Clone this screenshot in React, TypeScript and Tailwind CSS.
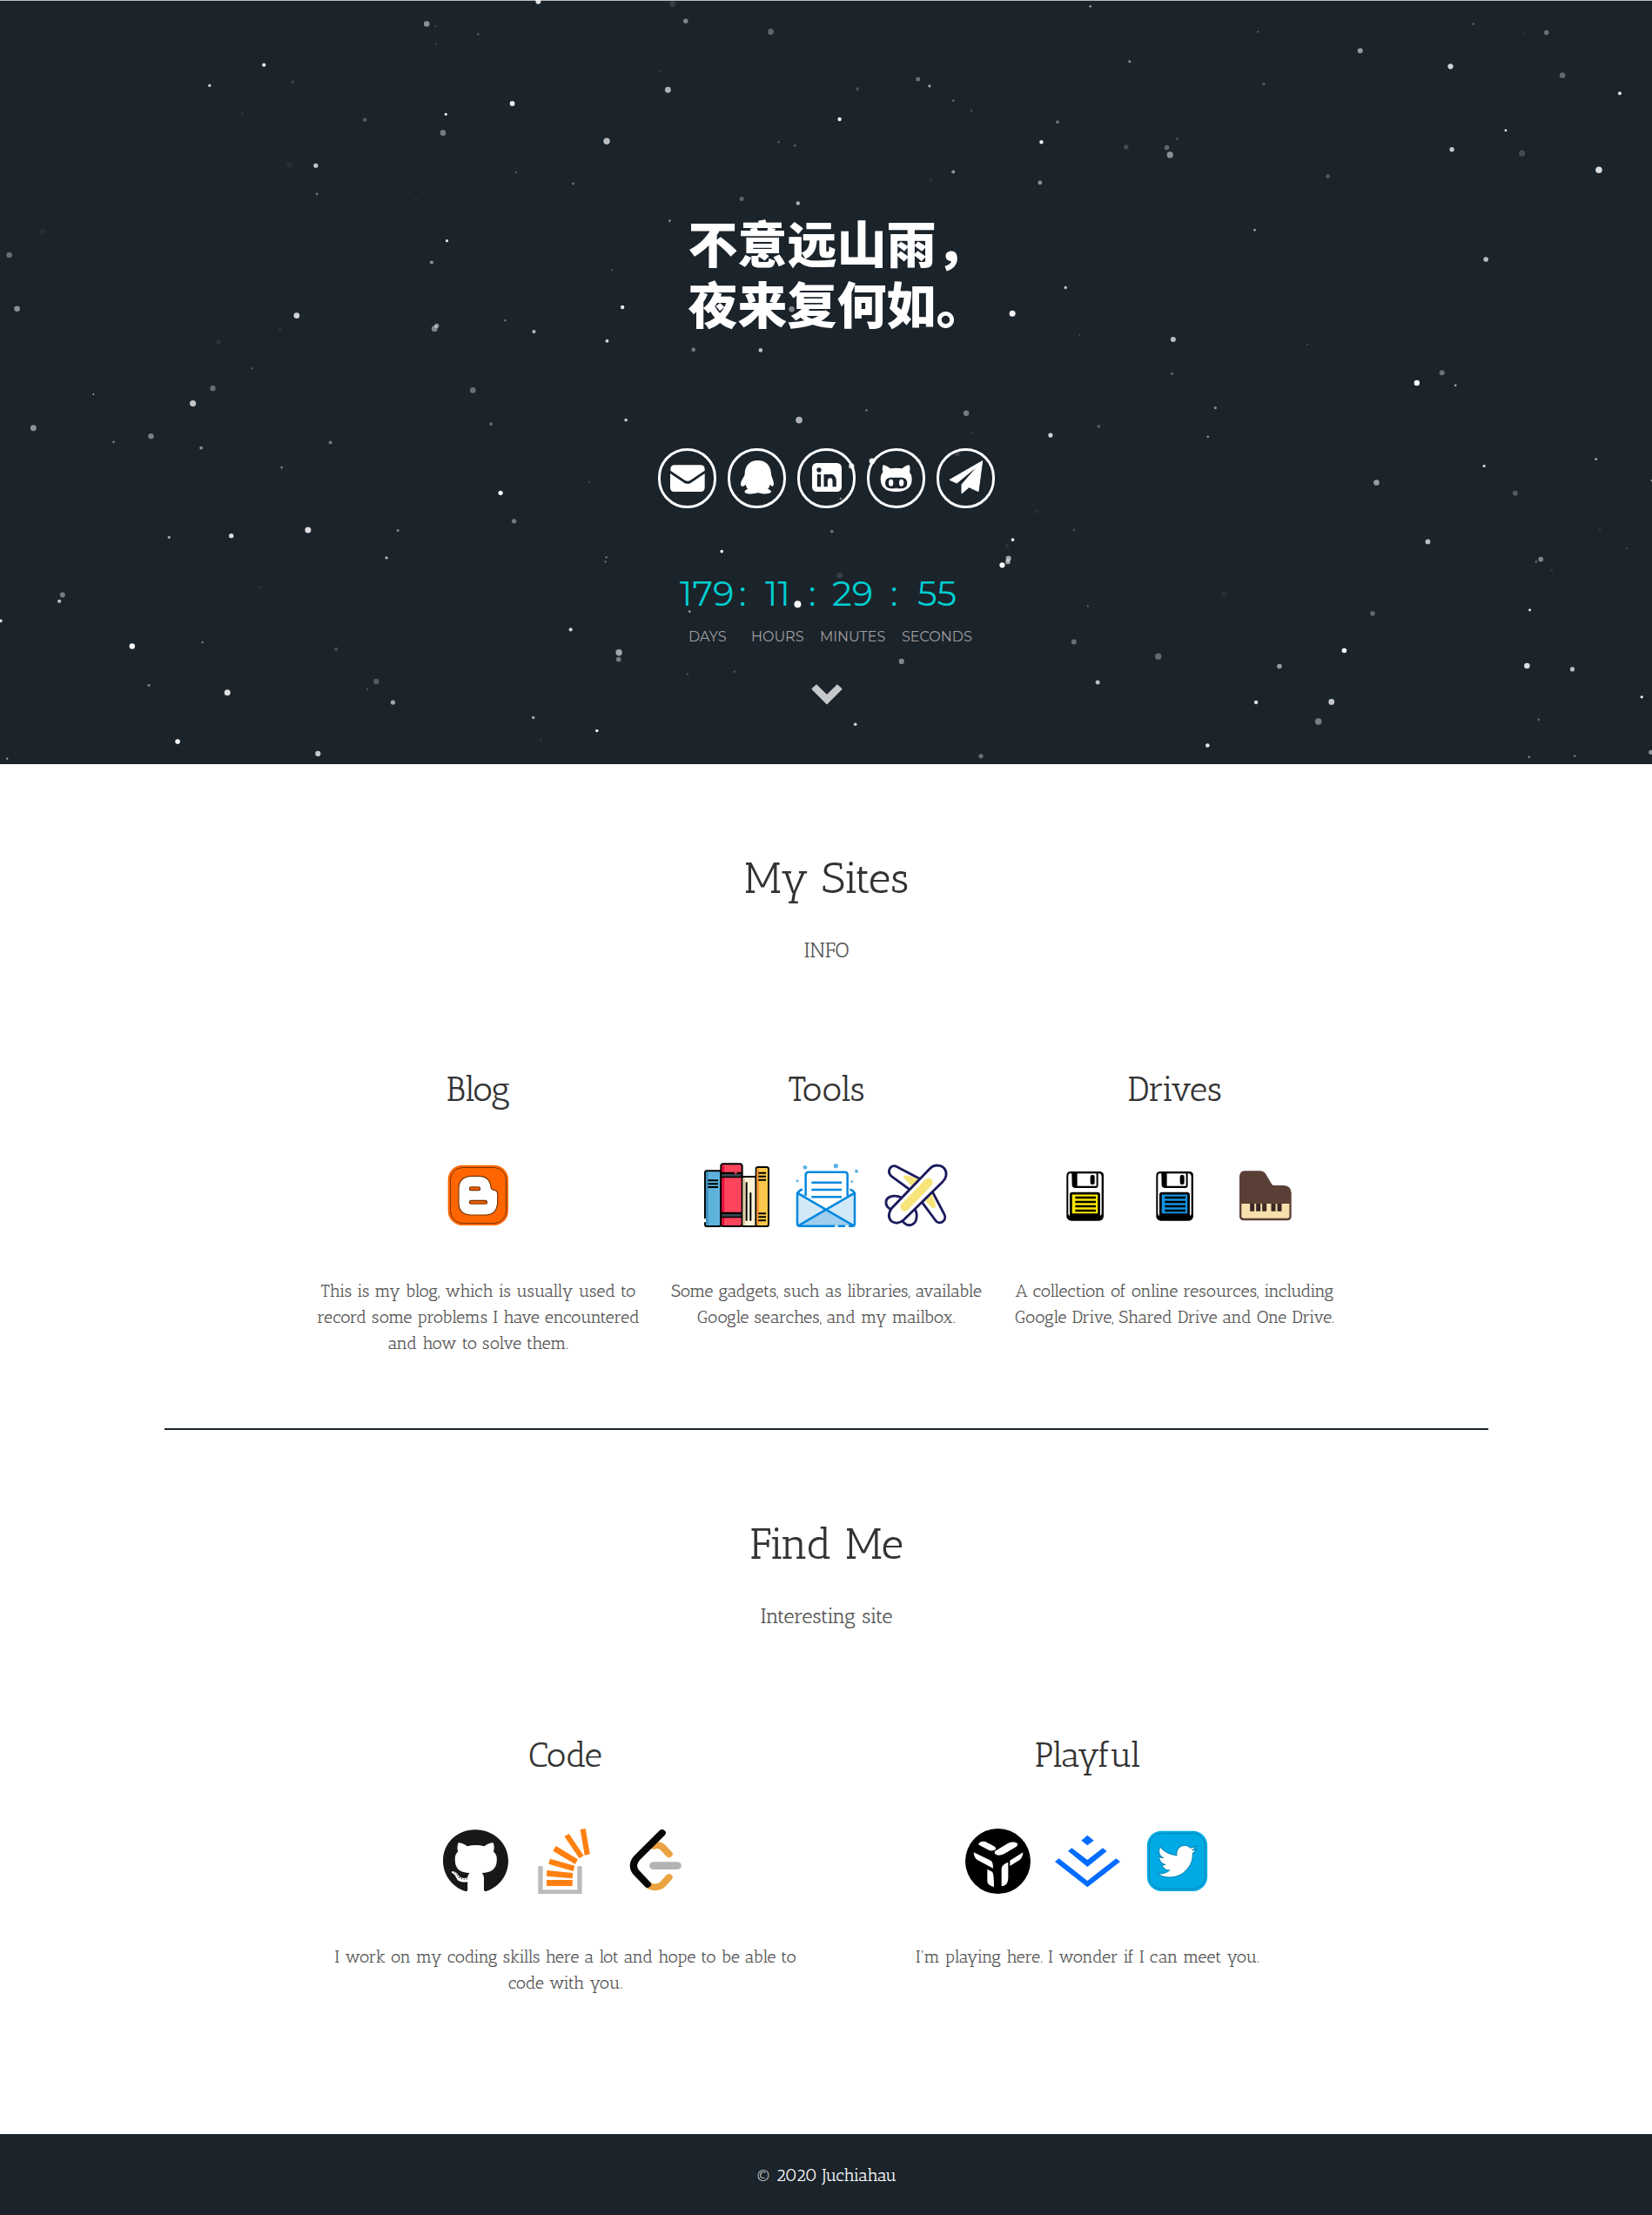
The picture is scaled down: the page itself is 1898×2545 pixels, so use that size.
import type { ReactNode } from 'react';
import { FaGithub, FaTwitter } from 'react-icons/fa';

type Star = [x: number, y: number, size: number, opacity: number];

// Star coordinates are stored per tile, three tiles side by side across the sky.
const TILE = 1568;
const tiles: { left: number; width: number; stars: Star[] }[] = [
  {
    left: 0,
    width: 640,
    stars: [
      [1515, 3, 3, 0.85], [1201, 49, 3.3, 0.5], [1226, 54, 1, 0.25], [1346, 70, 1.2, 0.3], [1227, 90, 1, 0.2],
      [743, 133, 2.1, 0.9], [824, 168, 1.7, 0.15], [590, 175, 1.7, 0.75], [682, 233, 1, 0.15], [1442, 212, 2.9, 0.9],
      [1255, 234, 1.5, 1], [1027, 245, 2.3, 0.25], [1247, 272, 3.3, 0.4], [814, 337, 3.3, 0.05], [889, 339, 2.6, 0.75],
      [1452, 353, 1.3, 0.25], [892, 397, 1.5, 0.35], [1171, 407, 1, 0.12], [120, 474, 3, 0.05], [26, 522, 3.2, 0.35],
      [1258, 493, 1.6, 0.9], [1215, 537, 2, 0.5], [48, 632, 3.3, 0.5], [835, 646, 3.4, 0.8], [788, 675, 1.2, 0.15],
      [615, 700, 2.8, 0.08], [1229, 667, 2.6, 0.55], [1223, 673, 3.4, 0.45], [1422, 656, 1.2, 0.4], [1503, 679, 2.1, 0.65],
      [710, 754, 1, 0.35], [263, 807, 0.9, 0.7], [599, 795, 3.2, 0.35], [543, 826, 3.6, 0.75], [1331, 799, 3.3, 0.35],
      [94, 876, 3.5, 0.5], [425, 893, 3.2, 0.42], [320, 905, 1.4, 0.4], [566, 917, 1.8, 0.5], [930, 906, 2, 0.4],
      [1382, 868, 1.8, 0.35], [793, 957, 1.5, 0.4], [1409, 1009, 2.6, 1], [1447, 1067, 2.7, 0.4], [476, 1100, 1.6, 0.6],
      [651, 1097, 2.7, 0.85], [867, 1085, 3.5, 0.85], [1120, 1086, 1.6, 0.45], [1088, 1142, 1.7, 0.65], [731, 1202, 1.5, 0.08],
      [176, 1218, 3, 0.4], [167, 1231, 2.1, 0.7], [2, 1271, 1.9, 0.85], [372, 1323, 3.2, 1], [570, 1315, 1.2, 0.4],
      [946, 1329, 2.1, 0.2], [1059, 1395, 3.2, 0.25], [419, 1403, 1.7, 0.4], [640, 1418, 3.5, 0.85], [1034, 1411, 1.2, 0.2],
      [1106, 1438, 2.6, 0.6], [1501, 1469, 1.8, 0.6], [500, 1518, 2.8, 1], [895, 1543, 3.1, 0.75], [20, 1553, 1.2, 0.6],
      [1523, 1514, 1, 0.15],
    ],
  },
  {
    left: 640,
    width: 630,
    stars: [
      [330, 8, 3.4, 0.12], [368, 43, 2.7, 0.45], [611, 65, 3.4, 0.3], [1525, 13, 1.4, 0.5], [294, 145, 1.5, 0.08],
      [317, 184, 3.4, 0.65], [859, 182, 2, 0.2], [1032, 162, 2.5, 0.35], [1065, 176, 1.6, 0.6], [1133, 206, 1.7, 0.25],
      [1185, 227, 1.4, 0.2], [808, 244, 2.2, 0.95], [1431, 250, 1.8, 0.4], [1385, 291, 2.2, 0.95], [142, 289, 3.7, 0.7],
      [634, 291, 1.3, 0.25], [680, 298, 1.5, 0.25], [1133, 352, 2, 0.5], [1381, 374, 2.4, 0.5], [46, 376, 1.4, 0.35],
      [528, 407, 2.5, 0.3], [689, 416, 2.2, 0.65], [322, 452, 1.3, 0.5], [1069, 369, 2, 0.05], [158, 553, 1.2, 0.2],
      [1454, 589, 1.7, 0.75], [187, 629, 2.2, 0.9], [1302, 642, 3.5, 0.95], [671, 633, 3.2, 0.45], [143, 698, 1.9, 0.8],
      [1494, 686, 1.2, 0.15], [390, 716, 2.3, 0.4], [582, 717, 2.3, 0.7], [885, 840, 1.4, 0.35], [692, 860, 3.8, 0.65],
      [1170, 846, 3.2, 0.4], [197, 860, 1.8, 0.75], [1187, 886, 1.3, 0.1], [1411, 891, 2.6, 0.8], [1549, 873, 1.9, 0.25],
      [842, 954, 3.2, 0.75], [901, 944, 3.4, 0.9], [1034, 943, 2.4, 0.25], [1144, 929, 3, 0.12], [811, 1021, 1.2, 0.5],
      [92, 987, 1.2, 0.15], [1372, 1047, 2.5, 0.05], [786, 1088, 1.9, 0.35], [1478, 1085, 1.7, 0.15], [1303, 1105, 1.8, 0.95],
      [471, 1129, 1.8, 1], [141, 1141, 1.3, 0.35], [138, 1150, 1.3, 0.3], [1287, 1117, 2.1, 0.08], [1291, 1143, 3.1, 0.6],
      [1289, 1150, 2.8, 0.6], [1273, 1157, 3.1, 1], [808, 1178, 3.5, 0.12], [688, 1237, 4, 0.97], [379, 1252, 1.4, 0.55],
      [1518, 1241, 1.1, 0.35], [39, 1289, 2.1, 0.8], [1478, 1314, 3, 0.35], [177, 1336, 3.7, 0.6], [176, 1350, 2.8, 0.4],
      [985, 1354, 3.1, 0.45], [507, 1375, 1.2, 0.25], [373, 1380, 1.2, 0.2], [1546, 1397, 2.5, 0.7], [853, 1483, 1.8, 0.85],
      [114, 1496, 1.7, 1], [1212, 1548, 2.6, 0.35],
    ],
  },
  {
    left: 1260,
    width: 638,
    stars: [
      [455, 65, 1, 0.35], [93, 126, 1.6, 0.45], [744, 104, 3, 0.55], [1064, 49, 1.2, 0.3], [1209, 67, 1, 0.12],
      [1270, 67, 2.8, 0.35], [999, 136, 3.1, 0.8], [1315, 154, 3.3, 0.32], [1477, 191, 2, 0.9], [472, 172, 1.7, 0.25],
      [1155, 267, 1.4, 1], [83, 301, 2.7, 0.18], [198, 302, 2.8, 0.3], [207, 317, 3.6, 0.5], [227, 284, 1, 0.4],
      [1003, 306, 2.7, 0.75], [1201, 314, 3.6, 0.18], [1418, 348, 3.8, 0.85], [653, 361, 2.3, 0.25], [446, 471, 1.3, 0.65],
      [1099, 531, 2.8, 0.7], [216, 695, 3, 0.7], [213, 765, 1.6, 0.3], [595, 705, 1, 0.25], [904, 784, 3.2, 1],
      [975, 763, 3, 0.35], [1013, 789, 1.4, 0.6], [335, 835, 1.6, 0.5], [314, 894, 1.3, 0.5], [1094, 954, 1.7, 0.75],
      [1410, 940, 1.4, 0.65], [790, 988, 3.3, 0.55], [1182, 1010, 3, 0.25], [1567, 984, 1, 0.6], [935, 1109, 2.9, 0.7],
      [1254, 1145, 2.9, 0.45], [1241, 1150, 1.4, 0.3], [1285, 1168, 1.4, 0.1], [1421, 1083, 1, 0.15], [1497, 1123, 1.1, 0.2],
      [361, 1216, 3.2, 0.06], [1223, 1249, 1.4, 0.95], [779, 1256, 2.8, 0.3], [699, 1332, 2.8, 1], [174, 1344, 3.7, 0.32],
      [516, 1364, 2.8, 0.55], [1215, 1363, 3.3, 0.85], [1343, 1370, 2.6, 0.7], [450, 1438, 2.2, 0.85], [663, 1437, 3.4, 0.75],
      [626, 1477, 3.8, 0.42], [1539, 1427, 1.6, 0.95], [1248, 1473, 1.2, 0.35], [313, 1526, 2.3, 0.9], [1221, 1550, 1.4, 0.4],
      [1350, 1548, 1.3, 0.4], [1565, 1540, 2.6, 0.5],
    ],
  },
];

function Stars() {
  return (
    <svg className="absolute -top-px left-0 h-[878px] w-full" viewBox="0 0 1898 878" preserveAspectRatio="none">
      {tiles.map((t) =>
        t.stars.map(([x, y, r, o]) => (
          <circle
            key={`${t.left}-${x}-${y}`}
            cx={t.left + (x * t.width) / TILE}
            cy={(y * 880) / TILE}
            r={r}
            fill="#fff"
            opacity={o}
          />
        )),
      )}
    </svg>
  );
}

const NIGHT = '#1b232b';

const contacts: { name: string; art: ReactNode; box: string }[] = [
  {
    name: 'Email',
    box: '57 894 183 189',
    art: (
      <>
        <path d="M91 962V957Q91 943 105 943H195Q209 943 209 957V962L160 995Q150 1001 140 995Z" />
        <path d="M90 972L138 1004Q150 1011 162 1004L209 972V1021Q209 1035 195 1035H104Q90 1035 90 1021Z" />
      </>
    ),
  },
  {
    name: 'QQ',
    box: '297 894 183 189',
    art: (
      <path d="M392 927C420 927 437 945 438 974C438 982 447 995 447 1008C446 1021 440 1016 434 1010C432 1018 430 1022 426 1025C436 1029 441 1034 436 1038C430 1043 405 1044 392 1038C378 1044 352 1044 347 1037C345 1032 350 1028 358 1025C354 1022 352 1018 350 1010C344 1016 336 1021 333 1010C332 996 346 984 347 974C347 945 364 927 392 927Z" />
    ),
  },
  {
    name: 'LinkedIn',
    box: '537 894 183 189',
    art: (
      <>
        <rect x="579" y="936" width="102" height="99" rx="16" />
        <circle cx="603" cy="960" r="8" fill={NIGHT} />
        <path
          d="M603 975V1018M626 975V1018M626 997C627 981 638 981 642 981C652 981 656 988 656 1000V1018"
          fill="none"
          stroke={NIGHT}
          strokeWidth="13"
        />
      </>
    ),
  },
  {
    name: 'GitHub',
    box: '777 894 183 189',
    art: (
      <>
        <path d="M824 943Q834 943 849 955Q869 951 889 955Q904 943 914 943Q919 954 915 967Q923 977 923 991Q923 1035 869 1035Q815 1035 815 991Q815 977 823 967Q819 954 824 943Z" />
        <rect x="831" y="986" width="76" height="38" rx="18" fill={NIGHT} />
        <ellipse cx="851" cy="1004" rx="8" ry="12" />
        <ellipse cx="887" cy="1004" rx="8" ry="12" />
        <path d="M864 1022Q869 1027 874 1022Z" />
      </>
    ),
  },
  {
    name: 'Telegram',
    box: '1017 894 183 189',
    art: (
      <path
        strokeLinejoin="round"
        stroke="#fff"
        strokeWidth="3"
        d="M1166 929L1152 1034L1120 1019L1095 1041L1095 1010L1152 944L1078 1005L1053 994Z"
      />
    ),
  },
];

function Tile({ box, children }: { box: string; children: ReactNode }) {
  return (
    <svg className="size-[75px]" viewBox={box} preserveAspectRatio="none">
      {children}
    </svg>
  );
}

function Blogger() {
  return (
    <Tile box="96 378 225 225">
      <rect x="104" y="386" width="208" height="208" rx="50" fill="#ff6600" />
      <rect x="112.5" y="394.5" width="192" height="192" rx="42" fill="none" stroke="#7a3300" strokeWidth="3" />
      <path
        d="M186 424H210Q248 424 252 462Q254 472 262 472Q274 473 275 484V516Q272 558 233 558H184Q142 556 141 518V464Q143 426 186 424Z"
        fill="#fff"
        stroke="#7a3300"
        strokeWidth="3.5"
      />
      <path d="M184 467H209M184 514H233" stroke="#7a3300" strokeWidth="15" strokeLinecap="round" />
      <path d="M184 467H209M184 514H233" stroke="#e65c00" strokeWidth="8" strokeLinecap="round" />
    </Tile>
  );
}

function Books() {
  return (
    <Tile box="147 378 225 225">
      <g stroke="#000" strokeWidth="6">
        <rect x="150" y="406" width="55" height="191" rx="7" fill="#5eb3dc" />
        <rect x="278" y="426" width="48" height="171" rx="3" fill="#fff3d6" />
        <rect x="326" y="393" width="43" height="204" rx="7" fill="#fac84b" />
        <rect x="205" y="382" width="73" height="215" rx="8" fill="#ff455e" />
      </g>
      <path d="M157 410V593" stroke="#3f93bd" strokeWidth="9" />
      <path d="M212 388V593" stroke="#e0133d" strokeWidth="9" />
      <path d="M284 430V593" stroke="#ddcaa4" strokeWidth="8" />
      <path d="M332 397V593" stroke="#f59a38" strokeWidth="8" />
      <path d="M205 420H278M205 558H278" stroke="#000" strokeWidth="20" />
      <path d="M208 421H275M208 559H275" stroke="#37474f" strokeWidth="8" />
      <path
        d="M160 439H195M160 451H195M160 462H195M334 413H360M334 425H360M334 437H360M334 553H360M334 565H360M334 577H360M293 445V578M307 481V578"
        stroke="#000"
        strokeWidth="6"
      />
      <path d="M147 571H153V583H147Z" fill="#fff" />
      <path d="M252 410H260V416H252Z" fill="#ff455e" />
    </Tile>
  );
}

function Mail() {
  return (
    <Tile box="456 378 225 225">
      <path d="M468 482H666V594Q666 597 660 597H474Q468 597 468 594Z" fill="#d2e9f8" />
      <path d="M470 594L567 538L664 594Z" fill="#a0ceee" />
      <path d="M497 495V420Q497 410 507 410H632Q641 410 641 420V495L567 538Z" fill="#fff" />
      <path
        d="M497 492V420Q497 410 507 410H632Q641 410 641 420V492M517 446H621M517 471H621M517 496H621M468 480V588Q468 596 476 596H598M608 596H633M645 596H658Q666 596 666 588V480M468 482L664 596M666 482L470 596M468 484Q474 472 486 470M666 484Q662 472 649 470"
        fill="none"
        stroke="#0288de"
        strokeWidth="7.5"
      />
      <g fill="#5db1e8">
        <circle cx="495" cy="394" r="7" />
        <circle cx="601" cy="389" r="8" />
        <circle cx="672" cy="407" r="6" />
        <circle cx="468" cy="440" r="4.5" />
        <circle cx="656" cy="443" r="4" />
      </g>
    </Tile>
  );
}

function Plane() {
  return (
    <Tile box="765 378 225 225">
      <g fill="#fff" stroke="#1b1a5c" strokeWidth="8.5" strokeLinejoin="round">
        <path d="M892 434L812 392C792 380 774 406 792 424L858 472Z" />
        <path d="M934 478L975 556C986 580 955 594 944 576L898 514Z" />
        <path d="M828 498C800 486 772 495 774 517C775 530 782 537 800 542Z" />
        <path d="M872 534C886 560 880 588 858 593C846 595 836 588 826 572Z" />
      </g>
      <path d="M838 422Q846 420 894 438L870 466L838 434Q830 426 838 422Z" fill="#f7e57c" />
      <path d="M932 484L946 524Q944 538 932 533L908 508Z" fill="#f7e57c" />
      <path
        d="M925 398C940 383 964 384 975 398C986 413 982 432 968 445L836 574C822 587 804 589 792 579C780 568 782 548 794 534Z"
        fill="#fff"
        stroke="#1b1a5c"
        strokeWidth="8.5"
      />
      <path d="M920 446L838 530" stroke="#f7e57c" strokeWidth="30" strokeLinecap="round" />
    </Tile>
  );
}

function Floppy({ color }: { color: string }) {
  return (
    <Tile box="207 378 225 225">
      <path d="M268 408H372Q384 410 384 422V562Q382 578 368 578H272Q256 577 256 562V422Q257 409 268 408Z" fill="#000" />
      <path
        d="M274 415H266Q262 418 262 424V555L267 562V486Q268 479 276 479H364Q371 480 372 486V562L377 555V424Q376 417 370 415H365V458Q364 465 356 465H284Q276 464 275 456Z"
        fill="#fff"
      />
      <path d="M293 415H359V458H293Z" fill="#fff" />
      <rect x="338" y="420" width="15" height="33" rx="6" fill="#000" />
      <rect x="275" y="487" width="89" height="66" fill={color} stroke="#0005" strokeWidth="2" />
      <path d="M286 498H357M286 513H357M286 528H357M286 543H357" stroke="#000" strokeWidth="7" />
    </Tile>
  );
}

function Piano() {
  return (
    <Tile box="825 378 225 225">
      <path d="M870 406H922Q936 406 943 417L964 453Q967 456 972 456H1005Q1029 457 1031 482V563Q1030 576 1017 577H866Q853 576 852 563V425Q853 407 870 406Z" fill="#5a3f37" />
      <path d="M859 519H1024V562Q1024 569 1016 569H867Q859 569 859 562Z" fill="#f6e1ad" />
      <path d="M896 519V545M917 519V545M938 519V545M969 519V545M990 519V545" stroke="#3b2723" strokeWidth="15" />
    </Tile>
  );
}

function StackOverflow() {
  return (
    <Tile box="677 393 210 225">
      <path d="M702 523V611H828V523" fill="none" stroke="#bcbbbb" strokeWidth="15" />
      <path
        d="M722 570H805V591H722ZM723 537L806 546L805 565L722 557ZM733 497L812 521L808 540L728 515ZM752 453L822 499L814 516L742 470ZM794 411L841 486L827 496L779 420ZM830 396L847 393L861 481L844 485Z"
        fill="#ff8010"
      />
    </Tile>
  );
}

function LeetCode() {
  return (
    <Tile box="966 393 210 225">
      <g fill="none" strokeWidth="23" strokeLinecap="round">
        <path d="M1068 453Q1086 446 1098 460L1116 481M1052 590C1066 598 1086 596 1096 585L1116 561" stroke="#eba340" />
        <path d="M1066 521H1143" stroke="#b3b3b3" strokeWidth="26" />
        <path d="M1094 408L1014 493C998 511 998 531 1014 548L1047 585" stroke="#070706" />
      </g>
    </Tile>
  );
}

function Uplabs() {
  return (
    <Tile box="237 393 225 225">
      <circle cx="349.5" cy="505.5" r="112.5" fill="#000" />
      <path
        fill="#fff"
        d="M282 447Q290 434 306 438L336 454Q346 461 341 466Q330 472 318 467L284 449ZM338 472L385 443Q402 436 416 443Q420 450 412 456L370 481Q350 490 339 480ZM266 475L325 503Q333 508 333 530L280 502Q267 494 266 475ZM391 503L436 475Q436 490 426 500L391 522ZM313 533L330 542Q336 548 336 594Q314 588 313 575ZM385 509V565Q384 590 362 592V530Q364 516 385 509Z"
      />
    </Tile>
  );
}

function Juejin() {
  return (
    <Tile box="546 393 225 225">
      <path
        fill="#006cff"
        d="M658 416L680 434L658 451L637 434ZM604 460L658 501L711 460L725 471L658 525L591 470ZM560 496L658 573L757 496L771 507L658 595L546 507Z"
      />
    </Tile>
  );
}

function Twitter() {
  return (
    <Tile box="855 393 225 225">
      <rect x="863.5" y="401" width="208" height="208" rx="50" fill="#00abe5" />
      <rect x="871.5" y="409" width="192" height="192" rx="42" fill="none" stroke="#0784b4" strokeWidth="3" />
      <FaTwitter x={899} y={438} size={136} color="#fff" stroke="#0784b4" strokeWidth={12} overflow="visible" />
    </Tile>
  );
}

const siteColumns = [
  {
    title: 'Blog',
    icons: [<Blogger key="blogger" />],
    lines: ['This is my blog, which is usually used to', 'record some problems I have encountered', 'and how to solve them.'],
  },
  {
    title: 'Tools',
    icons: [<Books key="books" />, <Mail key="mail" />, <Plane key="plane" />],
    lines: ['Some gadgets, such as libraries, available', 'Google searches, and my mailbox.'],
  },
  {
    title: 'Drives',
    icons: [<Floppy key="google" color="#fbe700" />, <Floppy key="shared" color="#1292e0" />, <Piano key="one" />],
    lines: ['A collection of online resources, including', 'Google Drive, Shared Drive and One Drive.'],
  },
];

const findColumns = [
  {
    title: 'Code',
    icons: [
      <FaGithub key="github" className="size-[75px] text-[#191717]" preserveAspectRatio="none" />,
      <StackOverflow key="so" />,
      <LeetCode key="leetcode" />,
    ],
    lines: ['I work on my coding skills here a lot and hope to be able to', 'code with you.'],
  },
  {
    title: 'Playful',
    icons: [<Uplabs key="uplabs" />, <Juejin key="juejin" />, <Twitter key="twitter" />],
    lines: ["I'm playing here. I wonder if I can meet you."],
  },
];

function Section({
  title,
  subtitle,
  columns,
  grid,
}: {
  title: string;
  subtitle: string;
  columns: typeof siteColumns;
  grid: string;
}) {
  return (
    <section className="text-center">
      <h2 className="pl-px text-[50px] leading-[60px] text-[#333]">{title}</h2>
      <p className="mt-[35px] pl-px text-2xl leading-9 text-[#555]">{subtitle}</p>
      <div className={`mx-auto mt-[116px] grid w-[1200px] ${grid}`}>
        {columns.map((c) => (
          <article key={c.title}>
            <h3 className="pl-px text-[40px] leading-[50px] text-[#333]">{c.title}</h3>
            <div className="mt-[60px] flex justify-center gap-7">{c.icons}</div>
            <p className="mt-[57px] pl-px text-xl leading-[30px] text-[#555]">
              {c.lines.map((l) => (
                <span key={l} className="block">
                  {l}
                </span>
              ))}
            </p>
          </article>
        ))}
      </div>
    </section>
  );
}

export default function App() {
  return (
    <div className="flex h-[2545px] w-full flex-col bg-white font-['Antic_Slab','Noto_Serif',serif]">
      <header className="relative flex h-[878px] shrink-0 flex-col items-center border-t border-[#b9bcc0] bg-[#1b232b]">
        <Stars />
        <h1 className="relative mt-[241px] w-[317px] text-[57px] leading-[70px] font-black whitespace-nowrap text-white font-['Noto_Sans_CJK_SC',sans-serif]">
          不意远山雨，
          <br />
          夜来复何如。
        </h1>
        <nav className="relative mt-[133px] flex gap-[13px]">
          {contacts.map((c) => (
            <a key={c.name} aria-label={c.name} className="block h-[69px] w-[67px] rounded-full border-3 border-white">
              <svg className="h-full w-full" viewBox={c.box} fill="#fff">
                {c.art}
              </svg>
            </a>
          ))}
        </nav>
        <div className="relative ml-px font-['Montserrat','Inter',sans-serif]">
          <div className="mt-[70px] mr-[19px] grid grid-cols-[68px_30px_50px_27px_67px_31px_45px] text-[40px] leading-[56px] whitespace-nowrap text-[#00ced1]">
            <span>179</span>
            <span>:</span>
            <span>11</span>
            <span>:</span>
            <span>29</span>
            <span>:</span>
            <span>55</span>
          </div>
          <div className="mt-[7px] ml-2.5 grid grid-cols-[72px_79px_94px_80px] text-base leading-[30px] text-[#a0a0a0]">
            <span>DAYS</span>
            <span>HOURS</span>
            <span>MINUTES</span>
            <span>SECONDS</span>
          </div>
        </div>
        <svg className="relative mt-[39px] ml-px h-[24px] w-[36px]" viewBox="576 470 108 72" fill="#c6c8cb">
          <path
            d="M594 474L630 509L666 474L680 487L630 537L580 487Z"
            stroke="#c6c8cb"
            strokeWidth="5"
            strokeLinejoin="round"
          />
        </svg>
      </header>

      <main className="grow">
        <div className="pt-[101px]">
          <Section title="My Sites" subtitle="INFO" columns={siteColumns} grid="grid-cols-3" />
        </div>
        <hr className="mx-auto mt-[83px] w-[1521px] border-t-2 border-[#1b232b]" />
        <div className="pt-[101px]">
          <Section title="Find Me" subtitle="Interesting site" columns={findColumns} grid="grid-cols-2" />
        </div>
      </main>

      <footer className="flex h-[93px] shrink-0 items-center justify-center bg-[#1b232b] pt-px pl-px text-xl text-white">
        © 2020 Juchiahau
      </footer>
    </div>
  );
}
